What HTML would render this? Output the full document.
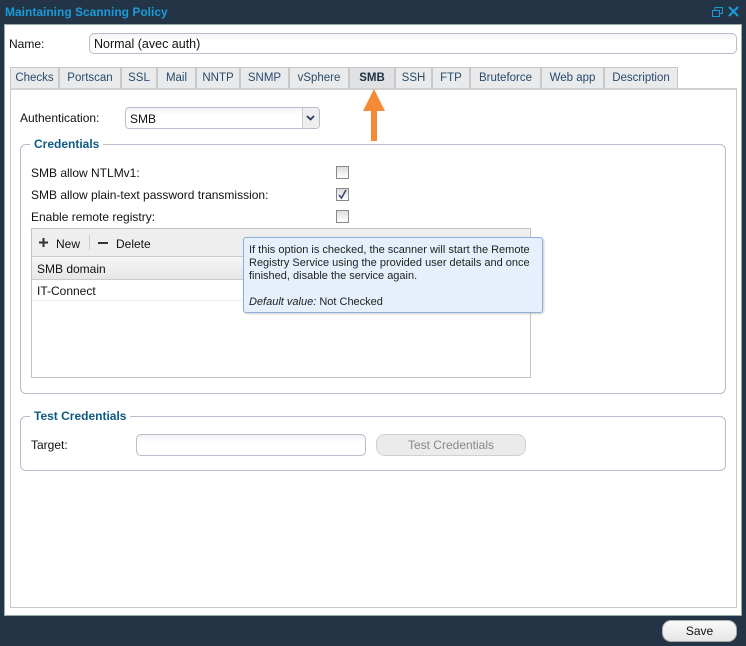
<!DOCTYPE html>
<html><head><meta charset="utf-8"><style>
*{box-sizing:border-box;margin:0;padding:0}
body{width:746px;height:646px;background:#233446;font-family:"Liberation Sans",sans-serif;font-size:12px;color:#111;position:relative;overflow:hidden}
.a{position:absolute}
.title{left:5px;top:5px;color:#1a9bd7;font-weight:bold;font-size:12px}
.main{left:4px;top:24px;width:738px;height:592px;background:#fff;border:1px solid #9aa}
.tab{position:absolute;top:67px;height:21px;background:#e9eaec;border:1px solid #c8c8c8;border-bottom:none;text-align:center;line-height:20px;color:#2a4a6a;font-size:11.5px}
.inp{border:1px solid #b9bccb;border-radius:5px;background:linear-gradient(#f3f3f3,#fff 40%)}
.fs{border:1px solid #b9bccb;border-radius:6px}
.leg{background:#fff;color:#0d5a82;font-weight:bold;padding:0 4px}
.cb{width:13px;height:13px;border:1px solid #888;background:linear-gradient(#ddd,#fff)}
</style></head><body>
<div class="a title">Maintaining Scanning Policy</div>
<svg class="a" style="left:712px;top:7px" width="11" height="11"><rect x="0.5" y="3.5" width="7" height="6" fill="none" stroke="#1a9bd7"/><path d="M3 3V0.5H10.5V6.5H8" fill="none" stroke="#1a9bd7"/></svg>
<svg class="a" style="left:728px;top:6px" width="11" height="11"><path d="M1 1L10 10M10 1L1 10" stroke="#1a9bd7" stroke-width="2.2"/></svg>
<div class="a main"></div>
<div class="a" style="left:9px;top:37px">Name:</div>
<div class="a inp" style="left:89px;top:33px;width:648px;height:21px;padding:3px 4px;font-size:12.5px">Normal (avec auth)</div>
<div class="a" style="left:10px;top:88px;width:727px;height:520px;border:1px solid #c8c8c8;border-top:2px solid #d0d0d0"></div>
<div class="tab" style="left:10px;width:49px">Checks</div>
<div class="tab" style="left:59px;width:62px">Portscan</div>
<div class="tab" style="left:121px;width:36px">SSL</div>
<div class="tab" style="left:157px;width:39px">Mail</div>
<div class="tab" style="left:196px;width:44px">NNTP</div>
<div class="tab" style="left:240px;width:49px">SNMP</div>
<div class="tab" style="left:289px;width:60px">vSphere</div>
<div class="tab" style="left:349px;width:46px;background:#dfe1e4;font-weight:bold;color:#1d2e40">SMB</div>
<div class="tab" style="left:395px;width:37px">SSH</div>
<div class="tab" style="left:432px;width:38px">FTP</div>
<div class="tab" style="left:470px;width:71px">Bruteforce</div>
<div class="tab" style="left:541px;width:63px">Web app</div>
<div class="tab" style="left:604px;width:74px">Description</div>
<svg class="a" style="left:362px;top:89px" width="24" height="52"><path d="M12 0L23 22H15V52H9V22H1Z" fill="#f58a36"/></svg>
<div class="a" style="left:20px;top:111px">Authentication:</div>
<div class="a inp" style="left:125px;top:107px;width:195px;height:22px;border-radius:4px;padding:4px 4px">SMB</div>
<div class="a" style="left:302px;top:108px;width:17px;height:20px;border-left:1px solid #ccc;background:#eee;border-radius:0 4px 4px 0"></div>
<svg class="a" style="left:306px;top:115px" width="9" height="6"><path d="M1 1L4.5 4.5L8 1" fill="none" stroke="#2a3a5a" stroke-width="1.8"/></svg>
<div class="a fs" style="left:20px;top:144px;width:706px;height:250px"></div>
<div class="a leg" style="left:30px;top:137px">Credentials</div>
<div class="a" style="left:31px;top:166px">SMB allow NTLMv1:</div>
<div class="a" style="left:31px;top:188px">SMB allow plain-text password transmission:</div>
<div class="a" style="left:31px;top:210px">Enable remote registry:</div>
<div class="a cb" style="left:336px;top:166px"></div>
<div class="a cb" style="left:336px;top:188px"></div>
<svg class="a" style="left:337px;top:189px" width="11" height="11"><path d="M2 6L4.5 9L9 1" fill="none" stroke="#3a4a7a" stroke-width="1.6"/></svg>
<div class="a cb" style="left:336px;top:210px"></div>
<div class="a" style="left:31px;top:228px;width:500px;height:150px;border:1px solid #c4c4c4"></div>
<div class="a" style="left:32px;top:229px;width:498px;height:27px;background:#eeeeee"></div>
<svg class="a" style="left:38px;top:237px" width="11" height="11"><path d="M5.5 1V10M1 5.5H10" stroke="#333" stroke-width="2"/></svg>
<div class="a" style="left:56px;top:237px">New</div>
<div class="a" style="left:89px;top:235px;width:1px;height:15px;background:#ccc"></div>
<div class="a" style="left:98px;top:242px;width:10px;height:2px;background:#333"></div>
<div class="a" style="left:116px;top:237px">Delete</div>
<div class="a" style="left:32px;top:256px;width:498px;height:24px;background:linear-gradient(#f6f6f6,#e6e6e6);border-top:1px solid #ccc;border-bottom:1px solid #ccc"></div>
<div class="a" style="left:37px;top:262px">SMB domain</div>
<div class="a" style="left:37px;top:284px">IT-Connect</div>
<div class="a" style="left:32px;top:300px;width:498px;height:1px;background:#eee"></div>
<div class="a" style="left:243px;top:237px;width:300px;height:76px;background:#e5f0fc;border:1px solid #8eb0d6;border-radius:3px;padding:6px 5px;font-size:11px;line-height:13px;color:#222;box-shadow:1px 1px 2px rgba(0,0,0,.2)">If this option is checked, the scanner will start the Remote Registry Service using the provided user details and once finished, disable the service again.<br><br><i>Default value:</i> Not Checked</div>
<div class="a fs" style="left:20px;top:416px;width:706px;height:55px"></div>
<div class="a leg" style="left:30px;top:409px">Test Credentials</div>
<div class="a" style="left:31px;top:438px">Target:</div>
<div class="a inp" style="left:136px;top:434px;width:230px;height:22px"></div>
<div class="a" style="left:376px;top:434px;width:150px;height:22px;border:1px solid #d0d0d0;border-radius:9px;background:#ebebeb;color:#888;text-align:center;line-height:21px">Test Credentials</div>
<div class="a" style="left:662px;top:620px;width:75px;height:22px;border:1px solid #aaa;border-radius:9px;background:linear-gradient(#fafafa,#e6e6e6);text-align:center;line-height:21px">Save</div>
</body></html>
